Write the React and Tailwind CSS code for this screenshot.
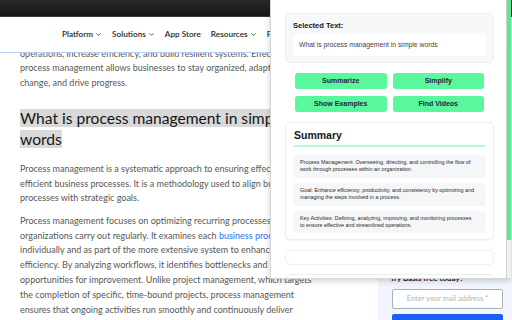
import { ChevronDown } from 'lucide-react';

const page = { fontFamily: 'Lato, "Noto Sans", sans-serif' };
const pop = { fontFamily: '"Liberation Sans", Arial, sans-serif' };

function NavItem({ label, chevron = true }) {
  return (
    <div className="flex items-center gap-[2px] text-[8.2px] font-semibold text-[#1f1f1f]">
      <span>{label}</span>
      {chevron && <ChevronDown className="w-[7px] h-[7px]" strokeWidth={2.5} />}
    </div>
  );
}

function SummaryItem({ children }) {
  return (
    <div className="bg-[#f5f6f8] rounded-[4px] px-[7px] py-[4px] text-[5.4px] leading-[7.4px] text-[#2a2a2a]">
      {children}
    </div>
  );
}

function Popup() {
  return (
    <div
      className="absolute z-20 left-[270px] top-0 w-[241px] h-[279px] bg-white border-l border-b border-[#d6d6d6] shadow-[0_2px_6px_rgba(0,0,0,0.18)] flex"
      style={pop}
    >
      <div className="flex-1 overflow-hidden pl-[14px] pr-[12px] pt-[13px]">
        {/* selected text */}
        <div className="bg-[#f7f8fa] border border-[#eceef1] rounded-[5px] p-[7px] h-[50px]">
          <div className="text-[7.5px] leading-[9px] font-bold text-[#111827]">Selected Text:</div>
          <div className="mt-[4px] bg-white rounded-[4px] h-[22px] flex items-center px-[6px] text-[6.8px] text-[#3f3f46]">
            What is process management in simple words
          </div>
        </div>

        {/* actions */}
        <div className="grid grid-cols-2 gap-x-[6px] gap-y-[7px] mx-[10px] mt-[10px]">
          {['Summarize', 'Simplify', 'Show Examples', 'Find Videos'].map((t) => (
            <button
              key={t}
              className="h-[16px] bg-[#5bf79c] rounded-[3px] text-[7px] font-bold text-[#1e293b] flex items-center justify-center"
            >
              {t}
            </button>
          ))}
        </div>

        {/* summary */}
        <div className="mt-[10px] bg-white border border-[#eceef1] rounded-[5px] shadow-[0_1px_2px_rgba(0,0,0,0.05)] px-[7px] pt-[6px] pb-[6px]">
          <div className="text-[10.5px] leading-[13px] font-bold text-[#111827] pl-[1px]">Summary</div>
          <div className="h-[2px] bg-[#b8f8cf] mt-[3px] mx-[1px]"></div>
          <div className="mt-[8px] flex flex-col gap-[5px]">
            <SummaryItem>
              Process Management: Overseeing, directing, and controlling the flow of<br />
              work through processes within an organization.
            </SummaryItem>
            <SummaryItem>
              Goal: Enhance efficiency, productivity, and consistency by optimizing and<br />
              managing the steps involved in a process.
            </SummaryItem>
            <SummaryItem>
              Key Activities: Defining, analyzing, improving, and monitoring processes<br />
              to ensure effective and streamlined operations.
            </SummaryItem>
          </div>
        </div>

        <div className="mt-[10px] h-[15px] bg-white border border-[#eceef1] rounded-[5px]"></div>
        <div className="mt-[9px] h-[30px] bg-white border border-[#eceef1] rounded-[5px]"></div>
      </div>

      {/* scrollbar */}
      <div className="w-[5px] border-l border-[#cfcfcf] flex flex-col">
        <div className="h-[240px] bg-[#5ae894]"></div>
        <div className="flex-1 bg-[#f1f1f1]"></div>
      </div>
    </div>
  );
}

export default function App() {
  return (
    <div className="relative w-[512px] h-[320px] overflow-hidden bg-white" style={page}>
      <div className="h-[17px] bg-gradient-to-b from-[#2a2a2a] to-[#161616] border-b border-[#3a3a3a]"></div>

      <header className="h-[36px] border-b border-[#b4cdf0] flex items-center pl-[62px] gap-[10px] bg-white relative z-10">
        <NavItem label="Platform" />
        <NavItem label="Solutions" />
        <NavItem label="App Store" chevron={false} />
        <NavItem label="Resources" />
        <NavItem label="Pricing" chevron={false} />
      </header>

      <div className="flex">
        <article className="w-[378px] shrink-0 pl-[20px] text-[9px] leading-[14.8px] text-[#575757]">
          <p className="mt-[-6.5px] whitespace-nowrap">
            operations, increase efficiency, and build resilient systems. Effective<br />
            process management allows businesses to stay organized, adapt to<br />
            change, and drive progress.
          </p>
          <h2 className="mt-[17px] text-[15.6px] leading-[21.5px] text-[#161616] whitespace-nowrap">
            <span className="bg-[#d9d9d9]">What is process management in simple</span><br />
            <span className="bg-[#d9d9d9]">words</span>
          </h2>
          <p className="mt-[11px] whitespace-nowrap">
            Process management is a systematic approach to ensuring effective and<br />
            efficient business processes. It is a methodology used to align business<br />
            processes with strategic goals.
          </p>
          <p className="mt-[7.6px] whitespace-nowrap">
            Process management focuses on optimizing recurring processes that<br />
            organizations carry out regularly. It examines each <span className="text-[#2f6bf5]">business process</span><br />
            individually and as part of the more extensive system to enhance<br />
            efficiency. By analyzing workflows, it identifies bottlenecks and uncovers<br />
            opportunities for improvement. Unlike project management, which targets<br />
            the completion of specific, time-bound projects, process management<br />
            ensures that ongoing activities run smoothly and continuously deliver
          </p>
        </article>

        <aside className="flex-1 bg-[#f0f5fe] pl-[12px] pr-[9px] pt-[219px]">
          <div className="text-[8px] leading-[12px] font-bold text-[#1a1a1a] whitespace-nowrap">Try Basis free today?</div>
          <div className="mt-[5px] ml-[2px] h-[20px] bg-white border border-[#a9b0ba] rounded-[2px] flex items-center justify-center text-[7.5px] text-[#b3b3b3]">
            Enter your mail address *
          </div>
          <div className="mt-[5px] ml-[2px] h-[20px] bg-[#1c5cf7] rounded-[2px]"></div>
        </aside>
      </div>

      <Popup />
    </div>
  );
}
